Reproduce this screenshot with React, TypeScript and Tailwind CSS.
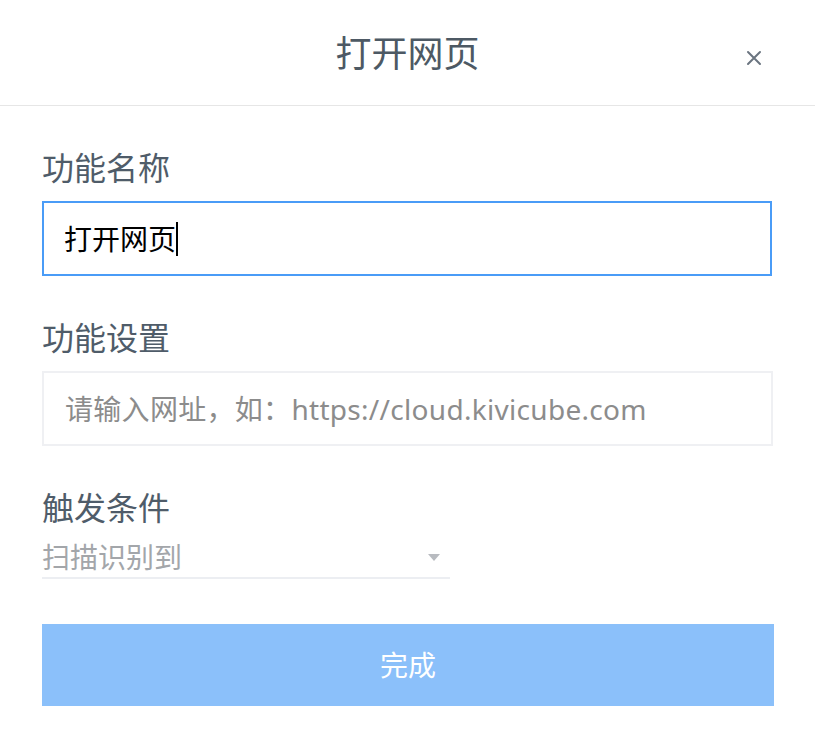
import React from "react";

export default function App() {
  const font = { fontFamily: '"Noto Sans", "Noto Sans CJK SC", sans-serif' };
  return (
    <div className="w-[815px] h-[746px] bg-white" style={font}>
      <div className="relative h-[106px] border-b border-[#e6e6e6] flex items-center justify-center">
        <div className="text-[36px] leading-[40px] text-[#4d5964] mt-[2px]">打开网页</div>
        <button className="absolute right-[53px] top-[50px] w-[16px] h-[16px] flex items-center justify-center">
          <svg width="16" height="16" viewBox="0 0 16 16">
            <path d="M2 2 L14 14 M14 2 L2 14" stroke="#6b7580" strokeWidth="2" strokeLinecap="round" />
          </svg>
        </button>
      </div>
      <div className="px-[42px] flex flex-col">
        <div className="mt-[42px] text-[32px] leading-[40px] text-[#4f5c69]">功能名称</div>
        <div className="mt-[13px] h-[75px] w-[730px] border-2 border-[#4a9cf7] flex items-center pl-[20px]">
          <span className="text-[28px] text-black leading-[36px]">打开网页</span>
          <span className="w-[2px] h-[34px] bg-black"></span>
        </div>
        <div className="mt-[42px] text-[32px] leading-[40px] text-[#4f5c69]">功能设置</div>
        <div className="mt-[13px] h-[75px] w-[731px] border-2 border-[#eff0f3] flex items-center pl-[21px]">
          <span className="text-[28px] text-[#8c8c8c] leading-[36px] tracking-[0.3px]">请输入网址，如：https://cloud.kivicube.com</span>
        </div>
        <div className="mt-[42px] text-[32px] leading-[40px] text-[#4f5c69]">触发条件</div>
        <div className="mt-[9px] w-[408px] h-[42px] border-b-2 border-[#eceef2] flex items-center justify-between">
          <span className="text-[28px] text-[#a3a6aa] leading-[36px]">扫描识别到</span>
          <svg width="12" height="8" viewBox="0 0 12 8" className="mr-[10px] mt-[2px]">
            <path d="M0 0 L12 0 L6 7 Z" fill="#b8bbc0" />
          </svg>
        </div>
        <button className="mt-[45px] w-[732px] h-[82px] bg-[#8bc0fa] text-white text-[28px] flex items-center justify-center">
          完成
        </button>
      </div>
    </div>
  );
}
